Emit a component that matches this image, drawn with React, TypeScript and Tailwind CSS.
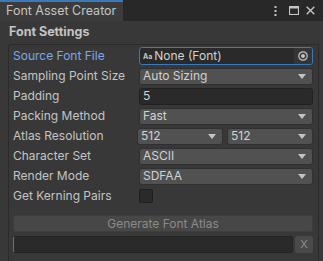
import React from 'react';

const Arrow = () => (
  <svg width="8" height="5" viewBox="0 0 8 5" className="shrink-0">
    <path d="M0 0h8L4 5z" fill="#c4c4c4" />
  </svg>
);

function Dropdown({ value, className = '' }: { value: string; className?: string }) {
  return (
    <div
      className={`h-[17px] flex items-center justify-between pl-[3px] pr-[6px] bg-[#515151] border border-[#303030] rounded-[3px] text-[#d2d2d2] ${className}`}
    >
      <span>{value}</span>
      <Arrow />
    </div>
  );
}

function Row({ label, children, active }: { label: string; children: React.ReactNode; active?: boolean }) {
  return (
    <div className="h-[20px] flex items-center">
      <div className={`w-[126px] shrink-0 ${active ? 'text-[#7ba8ea]' : 'text-[#c4c4c4]'}`}>{label}</div>
      <div className="flex-1 min-w-0">{children}</div>
    </div>
  );
}

export default function App() {
  return (
    <div
      className="w-[323px] h-[261px] overflow-hidden bg-[#383838] text-[12px] leading-none"
      style={{ fontFamily: 'Inter, "Noto Sans", sans-serif' }}
    >
      {/* tab bar */}
      <div className="h-[21px] flex bg-[#282828]">
        <div className="w-[123px] bg-[#3c3c3c] border-t-2 border-[#3a79bb] flex items-center pl-[6px] text-[#c4c4c4] text-[12.5px]">
          Font Asset Creator
        </div>
        <div className="flex-1 flex items-center justify-end pr-[8px]">
          <svg width="3" height="10" viewBox="0 0 3 10">
            <rect x="0.5" y="0" width="2" height="2" fill="#c4c4c4" />
            <rect x="0.5" y="4" width="2" height="2" fill="#c4c4c4" />
            <rect x="0.5" y="8" width="2" height="2" fill="#c4c4c4" />
          </svg>
          <svg width="10" height="9" viewBox="0 0 10 9" className="ml-[12px]">
            <rect x="0.5" y="0.5" width="9" height="8" fill="none" stroke="#c4c4c4" strokeWidth="1.2" />
            <rect x="0.5" y="0.5" width="9" height="2" fill="#c4c4c4" />
          </svg>
          <svg width="9" height="9" viewBox="0 0 9 9" className="ml-[7px]">
            <path d="M0.7 0.7l7.6 7.6M8.3 0.7l-7.6 7.6" stroke="#c4c4c4" strokeWidth="1.4" />
          </svg>
        </div>
      </div>

      {/* header */}
      <div className="h-[23px] flex items-center pl-[9px] font-bold text-[#c4c4c4] text-[12.5px]">Font Settings</div>

      {/* settings box */}
      <div className="ml-[8px] mr-[4px] h-[300px] border border-b-0 border-[#2b2b2b] rounded-tl-[3px] pt-[1px] pl-[4px] pr-[5px]">
        <Row label="Source Font File" active>
          <div className="h-[18px] flex items-center bg-[#2a2a2a] border border-[#3a79bb] rounded-[3px] overflow-hidden">
            <span className="pl-[3px] pr-[2px] text-[7px] font-bold text-[#c4c4c4]">Aa</span>
            <span className="flex-1 text-[#d2d2d2]">None (Font)</span>
            <div className="w-[18px] h-full bg-[#353535] flex items-center justify-center">
              <svg width="10" height="10" viewBox="0 0 10 10">
                <circle cx="5" cy="5" r="4.2" fill="none" stroke="#c4c4c4" strokeWidth="1.2" />
                <circle cx="5" cy="5" r="2" fill="#c4c4c4" />
              </svg>
            </div>
          </div>
        </Row>
        <Row label="Sampling Point Size">
          <Dropdown value="Auto Sizing" />
        </Row>
        <Row label="Padding">
          <div className="h-[17px] flex items-center pl-[3px] bg-[#2a2a2a] border border-[#212121] rounded-[3px] text-[#d2d2d2]">5</div>
        </Row>
        <Row label="Packing Method">
          <Dropdown value="Fast" />
        </Row>
        <Row label="Atlas Resolution">
          <div className="flex gap-[4px] -ml-[2px]">
            <Dropdown value="512" className="flex-1" />
            <Dropdown value="512" className="flex-1" />
          </div>
        </Row>
        <Row label="Character Set">
          <Dropdown value="ASCII" />
        </Row>
        <Row label="Render Mode">
          <Dropdown value="SDFAA" />
        </Row>
        <Row label="Get Kerning Pairs">
          <div className="w-[14px] h-[14px] bg-[#2a2a2a] border border-[#1f1f1f] rounded-[2px]" />
        </Row>

        <div className="mt-[9px] h-[17px] flex items-center justify-center bg-[#474747] border border-[#3e3e3e] rounded-[3px] text-[#8a8a8a]">
          Generate Font Atlas
        </div>

        <div className="mt-[4px] flex gap-[2px]">
          <div className="flex-1 h-[17px] bg-[#2a2a2a] border border-[#232323] border-l-[#3a79bb] rounded-[3px]" />
          <div className="w-[18px] h-[17px] flex items-center justify-center bg-[#4a4a4a] rounded-[3px] text-[#8a8a8a] text-[11px]">
            X
          </div>
        </div>
      </div>
    </div>
  );
}
